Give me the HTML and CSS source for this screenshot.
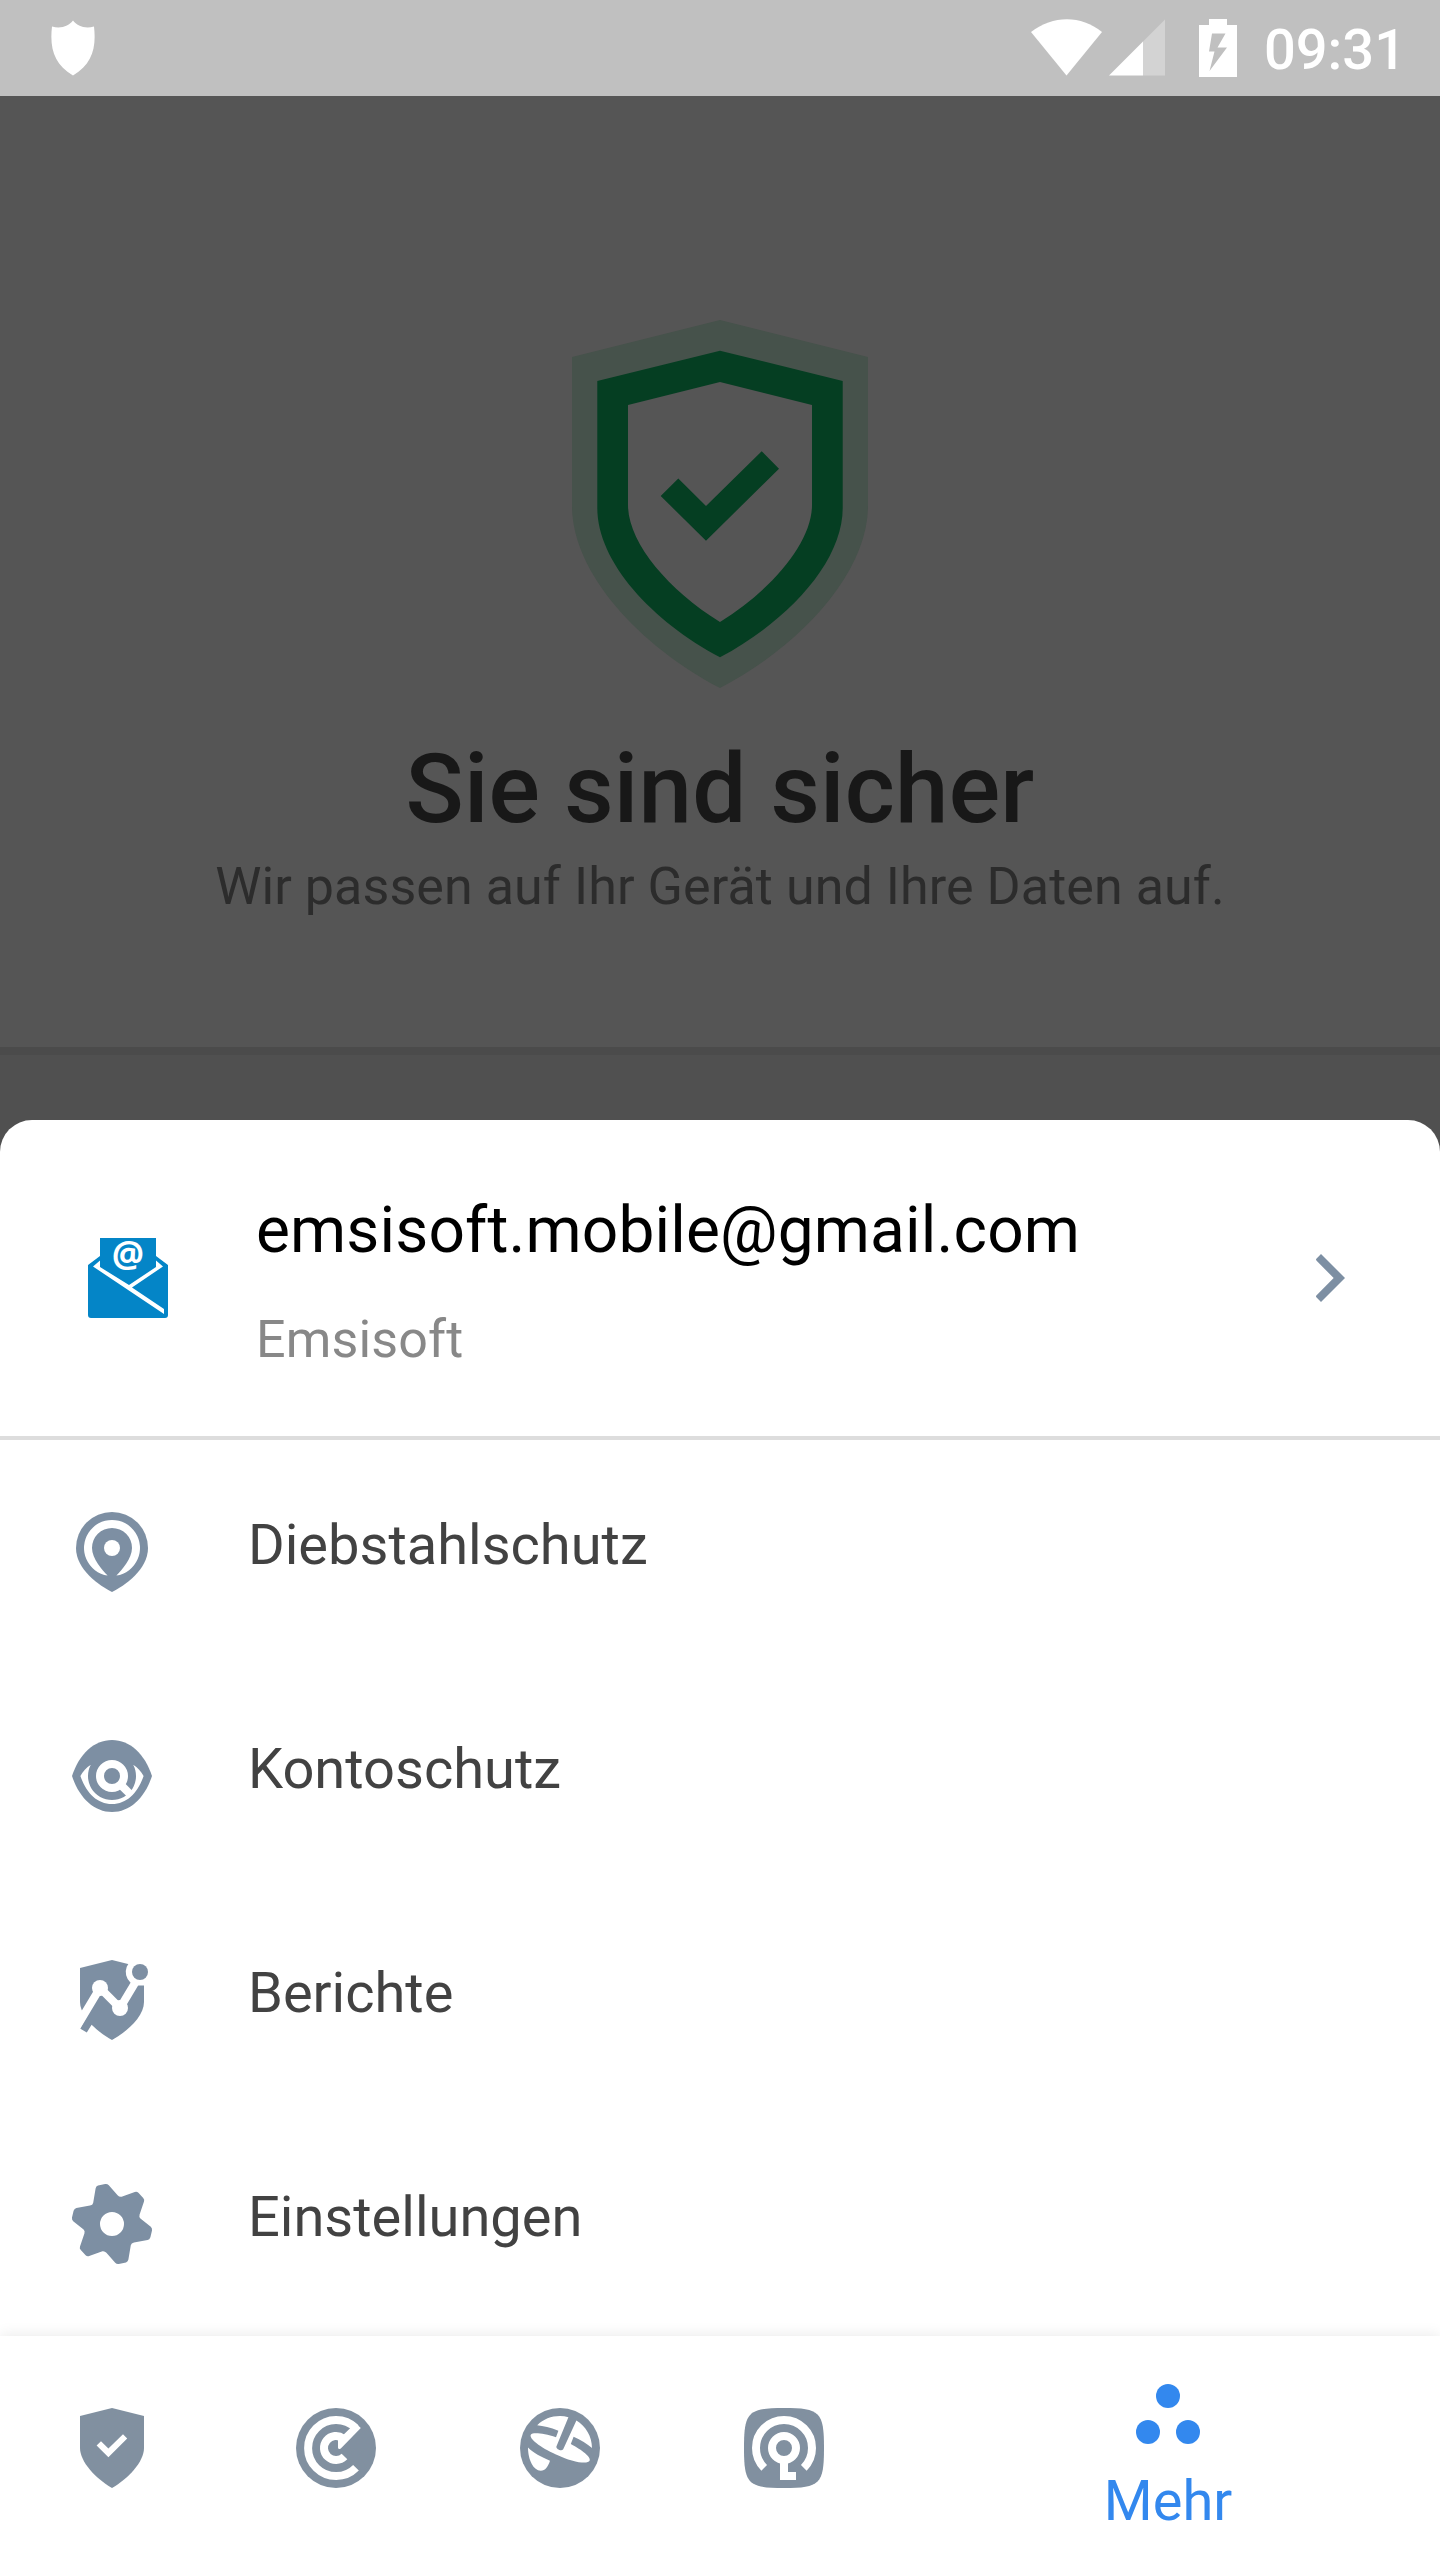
FILE: index.html
```html
<!DOCTYPE html>
<html lang="de">
<head>
  <meta charset="UTF-8" />
  <meta name="viewport" content="width=device-width, initial-scale=1.0"/>
  <title>Sie sind sicher</title>
  <link rel="stylesheet" href="styles.css">
</head>
<body>
  <div class="screen">
    <!-- Status bar -->
    <header class="status-bar">
      <svg class="status-shield" viewBox="0 0 44 56"><path d="M22 .5C18 6 10 9 1 6.5C-1.500 28 3 44 22 55.500C41 44 45.500 28 43 6.500C34 9 26 6 22 .5z"/></svg>
      <div class="status-right">
        <svg class="wifi" viewBox="0 0 72 57"><path d="M0 13C22-4 50-4 71 13L35.500 56.500z"/></svg>
        <svg class="signal" viewBox="0 0 56 57"><path class="faded" d="M34 22.500L56 .5V56.500H34z"/><path d="M0 56.500L34 22.500V56.500z"/></svg>
        <svg class="battery" viewBox="0 0 38 58"><path fill-rule="evenodd" d="M10 0h18v6h10v52H0V6h10zM13 14.500L10 32.500h5.500L10.500 52 28 28.500h-9.500L26.500 14.500z"/></svg>
        <span class="clock">09:31</span>
      </div>
    </header>

    <!-- Dimmed page behind the sheet -->
    <main class="hero">
      <svg class="hero-shield" viewBox="0 0 296 368">
        <path class="halo" fill-rule="evenodd" d="M148 0L296 37V186C296 252 230 325 148 368C66 325 0 252 0 186V37zM148 32L27 62V188C27 241 81 300 148 336C215 300 269 241 269 188V62z"/>
        <path class="ring" fill-rule="evenodd" d="M148 30.700L270.700 61V188C270.700 242 216 301 148 337.300C80 301 25.300 242 25.300 188V61zM148 62L56 85V185C56 222 95 269 148 302C201 269 240 222 240 185V85z"/>
        <path class="ring" d="M88.700 176l17.600-17.400L134 186l55.700-54.700L207 148.700 134 220.700z"/>
      </svg>
      <h1>Sie sind sicher</h1>
      <p>Wir passen auf Ihr Gerät und Ihre Daten auf.</p>
    </main>

    <!-- Bottom sheet -->
    <section class="sheet">
      <div class="account">
        <svg class="account-icon" viewBox="0 0 80 80">
          <path class="blue" d="M12 0H68V18L80 27V77Q80 80 77 80H3Q0 80 0 77V27L12 18z"/>
          <path class="paper" d="M12 22.500V29L41 47 68 29V22.500L75 28.500 44 49.500 76 71V76L5 28.500z"/>
          <text x="40" y="29" text-anchor="middle">@</text>
        </svg>
        <div class="account-text">
          <div class="email">emsisoft.mobile@gmail.com</div>
          <div class="name">Emsisoft</div>
        </div>
        <svg class="icon chevron" viewBox="0 0 24 24"><path d="M10 6L8.900 7.100Q8.600 7.400 8.900 7.700L13.170 12 8.900 16.300Q8.600 16.600 8.900 16.900L10 18l6-6z"/></svg>
      </div>

      <nav class="menu">
        <a class="menu-item">
          <svg class="icon" viewBox="0 0 24 24">
            <path d="M12 2a9 9 0 0 0-9 9c0 5.500 6 9.500 9 11 3-1.500 9-5.500 9-11a9 9 0 0 0-9-9z"/>
            <path class="cut" d="M10.900 17.900A7 7 0 1 1 13.100 17.900C14.400 16.600 17 13.600 17 11A5 5 0 0 0 7 11C7 13.600 9.600 16.600 10.900 17.900z"/>
            <circle class="cut" cx="12" cy="11" r="2"/>
          </svg>
          <span>Diebstahlschutz</span>
        </a>
        <a class="menu-item">
          <svg class="icon" viewBox="0 0 24 24">
            <path d="M2 12C3.800 6.500 7.500 3 12 3S20.200 6.500 22 12C20.200 17.500 16.500 21 12 21S3.800 17.500 2 12z"/>
            <path class="cut" d="M4.100 12C4.700 10.900 5.600 9.900 6.700 9.200A6 6 0 1 0 17.300 9.200C18.400 9.900 19.300 10.900 19.900 12C18.500 16.100 15.800 19 12 19S5.500 16.100 4.100 12z"/>
            <circle class="cut-line" cx="12" cy="12" r="3"/>
            <path class="cut-line" d="M14.200 14.200L16.500 16.500"/>
          </svg>
          <span>Kontoschutz</span>
        </a>
        <a class="menu-item">
          <svg class="icon" viewBox="0 0 24 24">
            <path d="M12 2L20 4V12.500C20 16 16 19.800 12 22C10.200 21 8.300 19.600 6.900 18.200L5.700 20.100 4 19.100 5.500 16.500C4.500 15 4 13.700 4 12.500V4z"/>
            <path class="cut" d="M19 1.500A3.500 3.500 0 0 0 16.600 7.600L18 8.350H22V1.500z"/>
            <path class="cut-line" d="M3 19L9 9L14 14L18.200 7"/>
            <circle class="cut" cx="9" cy="9" r="2"/>
            <circle class="cut" cx="14" cy="14" r="2"/>
            <circle cx="19" cy="5" r="2"/>
          </svg>
          <span>Berichte</span>
        </a>
        <a class="menu-item">
          <svg class="icon" viewBox="0 0 24 24">
            <path fill-rule="evenodd" d="M7.300 6.700L7.900 3.100Q8 2.600 8.500 2.400L10.300 2Q10.800 1.900 11.200 2.300L13.400 4.800Q13.800 5.300 14.400 5.200L17.700 4Q18.200 3.800 18.600 4.200L19.800 5.500Q20.200 5.900 20 6.400L18.900 9.600Q18.700 10.200 19.100 10.600L21.700 12.700Q22.100 13.100 22 13.600L21.600 15.300Q21.400 15.900 20.900 16L17.500 16.600Q16.800 16.700 16.700 17.300L16.100 20.900Q16 21.400 15.500 21.600L13.700 22Q13.200 22.100 12.800 21.700L10.600 19.200Q10.200 18.700 9.600 18.800L6.300 20Q5.800 20.200 5.400 19.800L4.200 18.500Q3.800 18.100 4 17.600L5.100 14.400Q5.300 13.800 4.900 13.400L2.300 11.300Q1.900 10.900 2 10.400L2.400 8.700Q2.600 8.100 3.100 8L6.500 7.400Q7.200 7.300 7.300 6.700zM12 9a3 3 0 1 0 0 6 3 3 0 0 0 0-6z"/>
          </svg>
          <span>Einstellungen</span>
        </a>
      </nav>
    </section>

    <!-- Tab bar -->
    <nav class="tab-bar">
      <a class="tab">
        <svg class="icon" viewBox="0 0 24 24">
          <path d="M12 2L20 4V12C20 15.500 16 19.700 12 22C8 19.700 4 15.500 4 12V4z"/>
          <path class="cut" d="M8.150 11.350L9.250 10.300 11.100 12.150 14.750 8.550 15.800 9.600 11.100 14.300z"/>
        </svg>
      </a>
      <a class="tab">
        <svg class="icon" viewBox="0 0 24 24">
          <circle cx="12" cy="12" r="10"/>
          <path class="cut-line" d="M17 16.950A7 7 0 1 1 16.950 7.050"/>
          <path class="cut-line" d="M14.120 14.120A3 3 0 1 1 13.800 9.600"/>
          <path class="cut" d="M18.200 7L13.200 12.100Q12.500 12.500 12.500 11.900V10L15.600 7 16.600 5.500z"/>
        </svg>
      </a>
      <a class="tab">
        <svg class="icon" viewBox="0 0 24 24">
          <circle cx="12" cy="12" r="10"/>
          <path class="cut" d="M6.300 6.300C7.800 4.800 9.800 4 12 4C12.700 4 13.400 4.100 14.100 4.300L11.100 11.600C11 12.300 12.400 12.900 12.800 12.300L16.100 5.100C18.400 6.500 20 9 20 12C18.800 11 17.200 10 15.400 9.200L14.700 11C17.500 12.500 19.900 14.300 19.400 15.200C18.900 16.200 15 15.500 11 13.600C7 11.900 4.200 9.600 4.700 8.700C5.200 8 8 8.400 11 9.300L11.600 7.700C9.600 6.800 7.800 6.500 6.300 6.300z"/>
          <path class="cut" d="M4 11.900C5.300 13.200 7.300 14.300 9.500 15.200C9 16.700 8.300 17.700 7.200 17.700C5.400 17.700 4 15 4 11.900z"/>
        </svg>
      </a>
      <a class="tab">
        <svg class="icon" viewBox="0 0 24 24">
          <path d="M2 12C2 3 3 2 12 2S22 3 22 12 21 22 12 22 2 21 2 12z"/>
          <path class="cut-line" d="M7.050 16.950A7 7 0 1 1 16.950 16.950"/>
          <circle class="cut-line" cx="12" cy="12" r="3"/>
          <path class="cut" d="M11 15.500h2V18h2v2h-4z"/>
        </svg>
      </a>
      <a class="tab active">
        <svg class="icon" viewBox="0 0 24 24">
          <circle cx="12" cy="7" r="3"/>
          <circle cx="7" cy="16" r="3"/>
          <circle cx="17" cy="16" r="3"/>
        </svg>
        <span>Mehr</span>
      </a>
    </nav>
  </div>
</body>
</html>
```
FILE: styles.css
```css
* {
  box-sizing: border-box;
}

body {
  margin: 0;
  font-family: Roboto, "Liberation Sans", sans-serif;
  background: #505050;
}

svg {
  display: block;
  flex: none;
}

.screen {
  display: flex;
  flex-direction: column;
  width: 1440px;
  height: 2560px;
  overflow: hidden;
}

/* Status bar */
.status-bar {
  display: flex;
  justify-content: space-between;
  height: 96px;
  padding: 0 34px 0 51px;
  background: #c0c0c0;
  color: #fff;
  fill: #fff;
}

.status-shield {
  width: 44px;
  height: 56px;
  margin-top: 20px;
}

.status-right {
  display: flex;
  align-items: flex-start;
}

.wifi {
  width: 72px;
  height: 57px;
  margin: 19px 6px 0 0;
}

.signal {
  width: 56px;
  height: 57px;
  margin: 19px 34px 0 0;
}

.signal .faded {
  fill: #d3d3d3;
}

.battery {
  width: 38px;
  height: 58px;
  margin: 19px 27px 0 0;
}

.clock {
  font-size: 56px;
  font-weight: 500;
  line-height: 66px;
  padding-top: 17px;
}

/* Hero */
.hero {
  display: flex;
  flex-direction: column;
  align-items: center;
  height: 959px;
  padding-top: 224px;
  background: #555;
  border-bottom: 8px solid #4b4b4b;
  flex: none;
}

.hero-shield {
  width: 296px;
  height: 368px;
}

.hero-shield .halo {
  fill: #46524b;
}

.hero-shield .ring {
  fill: #053e22;
}

h1 {
  margin: 45px 0 0;
  font-size: 96px;
  font-weight: 500;
  line-height: 112px;
  letter-spacing: 0.2px;
  color: #181818;
}

p {
  margin: 11px 0 0;
  font-size: 52px;
  line-height: 61px;
  letter-spacing: 0.08px;
  color: #2c2c2c;
}

/* Bottom sheet */
.sheet {
  margin-top: 65px;
  background: #fff;
  border-radius: 32px 32px 0 0;
  flex: none;
}

.account {
  display: flex;
  align-items: center;
  height: 320px;
  padding: 0 63px 0 88px;
  border-bottom: 4px solid #ddd;
}

.account-icon {
  width: 80px;
  height: 80px;
  overflow: visible;
}

.account-icon .blue {
  fill: #0485c7;
}

.account-icon .paper,
.account-icon text {
  fill: #fff;
}

.account-icon text {
  font-family: "Open Sans", sans-serif;
  font-size: 36px;
  font-weight: 700;
}

.account-text {
  flex: 1;
  margin: 6px 0 0 88px;
}

.email {
  font-size: 64px;
  line-height: 75px;
  letter-spacing: 0.15px;
  color: #000;
}

.name {
  margin-top: 41px;
  font-size: 52px;
  line-height: 61px;
  letter-spacing: 0.15px;
  color: #888;
}

.icon {
  width: 96px;
  height: 96px;
  fill: #7d8fa3;
}

.icon .cut {
  fill: #fff;
}

.icon .cut-line {
  fill: none;
  stroke: #fff;
  stroke-width: 2;
}

.menu-item {
  display: flex;
  align-items: center;
  height: 224px;
  padding-left: 64px;
}

.menu-item span {
  margin: 0 0 14px 88px;
  font-size: 56px;
  line-height: 66px;
  color: #424242;
}

/* Tab bar */
.tab-bar {
  display: flex;
  height: 224px;
  background: #fff;
  box-shadow: 0 -1px 14px rgba(0, 0, 0, 0.09);
  flex: none;
  position: relative;
}

.tab {
  display: flex;
  flex-direction: column;
  align-items: center;
  width: 224px;
  padding-top: 64px;
}

.tab .icon {
  fill: #8190a0;
}

.tab.active {
  flex: 1;
  padding-top: 32px;
}

.tab.active .icon {
  fill: #3388ee;
}

.tab.active span {
  margin-top: 4px;
  font-size: 56px;
  line-height: 66px;
  color: #3388ee;
}
```
